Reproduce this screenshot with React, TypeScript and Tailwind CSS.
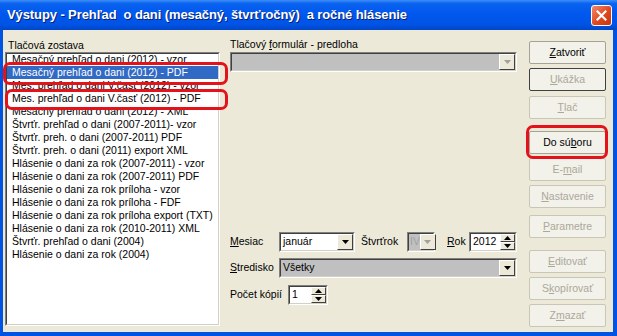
import React from "react";

const items = [
  "Mesačný prehľad o dani (2012) - vzor",
  "Mesačný prehľad o dani (2012) - PDF",
  "Mes. prehľad o dani V.časť (2012) - vzor",
  "Mes. prehľad o dani V.časť (2012) - PDF",
  "Mesačný prehľad o dani (2012) - XML",
  "Štvrťr. prehľad o dani (2007-2011)- vzor",
  "Štvrťr. preh. o dani (2007-2011) PDF",
  "Štvrťr. preh. o dani (2011) export XML",
  "Hlásenie o dani za rok (2007-2011) - vzor",
  "Hlásenie o dani za rok (2007-2011) PDF",
  "Hlásenie o dani za rok príloha - vzor",
  "Hlásenie o dani za rok príloha - FDF",
  "Hlásenie o dani za rok príloha export (TXT)",
  "Hlásenie o dani za rok (2010-2011) XML",
  "Štvrťr. prehľad o dani (2004)",
  "Hlásenie o dani za rok (2004)",
];

function Sunken({ className, children }: { className?: string; children: React.ReactNode }) {
  return (
    <div className={"border border-t-[#808080] border-l-[#808080] border-b-white border-r-white " + (className ?? "")}>
      <div className="w-full h-full border border-t-[#404040] border-l-[#404040] border-b-[#d4d0c8] border-r-[#d4d0c8] flex">
        {children}
      </div>
    </div>
  );
}

function Arrow({ up, disabled }: { up?: boolean; disabled?: boolean }) {
  return (
    <svg width="7" height="4" viewBox="0 0 7 4" className={up ? "rotate-180" : ""}>
      <path d="M0 0h7L3.5 4z" fill={disabled ? "#a0a0a0" : "#000"} />
    </svg>
  );
}

function DropBtn({ disabled }: { disabled?: boolean }) {
  return (
    <div className="w-[16px] h-full bg-[#ece9d8] border border-t-white border-l-white border-b-[#404040] border-r-[#404040] flex items-center justify-center shrink-0">
      <Arrow disabled={disabled} />
    </div>
  );
}

function Combo({ value, disabled, gray, className }: { value?: string; disabled?: boolean; gray?: boolean; className?: string }) {
  return (
    <Sunken className={"h-[20px] " + (className ?? "")}>
      <div className={"flex-1 flex items-center pl-[2px] " + (gray ? "bg-[#c0c0c0]" : "bg-white")}>{value}</div>
      <DropBtn disabled={disabled} />
    </Sunken>
  );
}

function Spin({ value, className }: { value: string; className?: string }) {
  return (
    <Sunken className={"h-[20px] " + (className ?? "")}>
      <div className="flex-1 flex items-center pl-[2px] bg-white">{value}</div>
      <div className="w-[15px] flex flex-col shrink-0">
        <div className="flex-1 bg-[#ece9d8] border border-t-white border-l-white border-b-[#404040] border-r-[#404040] flex items-center justify-center">
          <Arrow up />
        </div>
        <div className="flex-1 bg-[#ece9d8] border border-t-white border-l-white border-b-[#404040] border-r-[#404040] flex items-center justify-center">
          <Arrow />
        </div>
      </div>
    </Sunken>
  );
}

function Btn({ children, disabled, focus, className }: { children: React.ReactNode; disabled?: boolean; focus?: boolean; className?: string }) {
  const border = focus ? "border-[#404040]" : disabled ? "border-[#c9c6b8]" : "border-[#a6a396]";
  return (
    <div
      className={
        "h-[23px] rounded-[2px] border flex items-center justify-center bg-[#f2f1ea] " +
        border +
        (disabled ? " text-[#aca899]" : " text-black") +
        " " +
        (className ?? "")
      }
    >
      <span>{children}</span>
    </div>
  );
}

export default function App() {
  return (
    <div className="relative w-[617px] h-[336px] overflow-hidden bg-[#0054e3] flex flex-col text-[10.5px] text-black font-['Liberation_Sans',Arial,sans-serif]">
      {/* title bar */}
      <div className="h-[30px] shrink-0 flex items-center pl-[7px] pr-[5px] bg-[linear-gradient(180deg,#3d8ef7_0%,#0a62ef_12%,#0058ee_45%,#0054e6_80%,#0046c8_100%)]">
        <span className="flex-1 text-white font-bold text-[13px] whitespace-pre tracking-[-0.1px] [text-shadow:1px_1px_0_#0a1f6e]">
          Výstupy - Prehľad  o dani (mesačný, štvrťročný)  a ročné hlásenie
        </span>
        <div className="w-[21px] h-[21px] rounded-[3px] border border-white bg-[linear-gradient(135deg,#f08a6c,#e0471e_55%,#c7360f)] flex items-center justify-center">
          <svg width="11" height="11" viewBox="0 0 11 11">
            <path d="M1.5 1.5l8 8M9.5 1.5l-8 8" stroke="#fff" strokeWidth="2.2" strokeLinecap="square" />
          </svg>
        </div>
      </div>

      {/* body */}
      <div className="flex-1 ml-[3px] mr-[4px] mb-[4px] bg-[#ece9d8] flex">
        {/* left: report list */}
        <div className="pl-[2px] flex flex-col w-[217px]">
          <div className="pt-[8px] h-[22px] leading-[14px] pl-[3px]">Tlačová zostava</div>
          <Sunken className="w-[215px] h-[274px] bg-white">
            <div className="flex-1 bg-white overflow-hidden">
              <div className="-mt-[1px]">
                {items.map((t, i) => (
                  <div
                    key={t}
                    className={
                      "h-[13px] leading-[13px] pl-[5px] whitespace-nowrap " + (i === 1 ? "bg-[#316ac5] text-white" : "")
                    }
                  >
                    {t}
                  </div>
                ))}
              </div>
            </div>
          </Sunken>
        </div>

        {/* middle: form */}
        <div className="ml-[10px] w-[287px] flex flex-col">
          <div className="pt-[7px] h-[22px] leading-[14px]">
            Tlačový <u>f</u>ormulár - predloha
          </div>
          <Combo gray disabled className="w-[287px]" />

          <div className="mt-[160px] flex flex-col gap-[6px]">
            <div className="flex items-center h-[20px]">
              <span className="w-[49px]">
                <u>M</u>esiac
              </span>
              <Combo value="január" className="w-[76px]" />
              <span className="ml-[6px] w-[46px]">Štvrťrok</span>
              <Sunken className="h-[20px] w-[28px]">
                <div className="flex-1 bg-[#c0c0c0] flex items-center pl-[1px] text-[#a0a0a0]">IV</div>
                <DropBtn disabled />
              </Sunken>
              <span className="ml-[12px] w-[22px]">
                <u>R</u>ok
              </span>
              <Spin value="2012" className="w-[48px]" />
            </div>
            <div className="flex items-center h-[20px]">
              <span className="w-[49px]">
                <u>S</u>tredisko
              </span>
              <Combo value="Všetky" gray className="w-[238px]" />
            </div>
            <div className="flex items-center h-[20px] mt-[1px]">
              <span className="w-[58px]">Počet kópií</span>
              <Spin value="1" className="w-[40px]" />
            </div>
          </div>
        </div>

        {/* right: buttons */}
        <div className="ml-[12px] w-[77px] flex flex-col pt-[11px]">
          <Btn>
            <u>Z</u>atvoriť
          </Btn>
          <Btn disabled focus className="mt-[4px]">
            <u>U</u>kážka
          </Btn>
          <Btn disabled className="mt-[5px]">
            <u>T</u>lač
          </Btn>
          <Btn className="mt-[12px]">
            Do sú<u>b</u>oru
          </Btn>
          <Btn disabled className="mt-[4px]">
            E-<u>m</u>ail
          </Btn>
          <Btn disabled className="mt-[4px]">
            <u>N</u>astavenie
          </Btn>
          <Btn disabled className="mt-[7px]">
            <u>P</u>arametre
          </Btn>
          <Btn disabled className="mt-[12px]">
            <u>E</u>ditovať
          </Btn>
          <Btn disabled className="mt-[4px]">
            S<u>k</u>opírovať
          </Btn>
          <Btn disabled className="mt-[4px]">
            Z<u>m</u>azať
          </Btn>
        </div>
      </div>

      {/* red annotation outlines */}
      <div className="absolute left-[3px] top-[62px] w-[225px] h-[23px] border-[3px] border-[#e3121b] rounded-[7px]" />
      <div className="absolute left-[5px] top-[89px] w-[223px] h-[21px] border-[3px] border-[#e3121b] rounded-[7px]" />
      <div className="absolute left-[526px] top-[125px] w-[82px] h-[34px] border-[3px] border-[#e3121b] rounded-[7px]" />
    </div>
  );
}
